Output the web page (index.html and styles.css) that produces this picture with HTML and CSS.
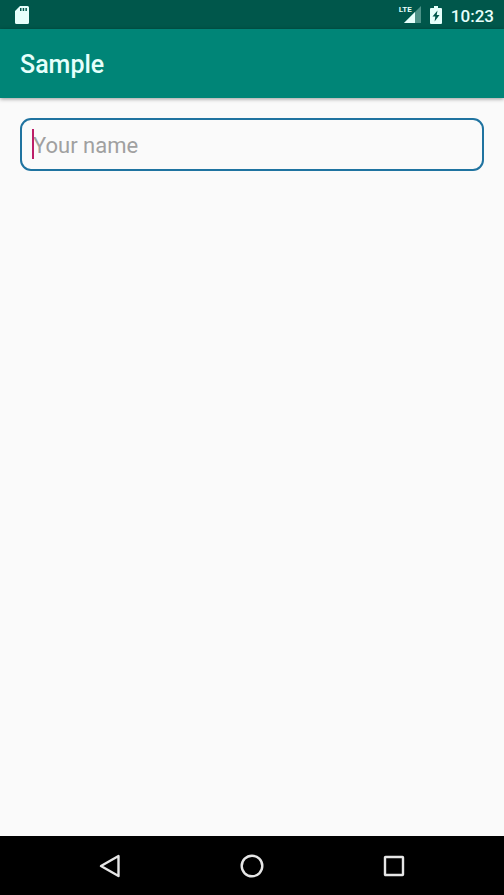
FILE: index.html
```html
<!DOCTYPE html>
<html lang="en">
<head>
<meta charset="utf-8">
<meta name="viewport" content="width=device-width, initial-scale=1">
<title>Sample</title>
<link rel="stylesheet" href="styles.css">
</head>
<body>
<div class="status-bar">
  <svg class="sd-card" viewBox="0 0 16 20" width="16" height="20" aria-hidden="true">
    <path fill="#e6fffb" fill-rule="evenodd" d="M6 1H13.500Q15 1 15 2.500V17.500Q15 19 13.500 19H2.500Q1 19 1 17.500V6ZM6 3V6H7.500V3ZM8.700 3V6H10.200V3ZM11.400 3V6H12.900V3Z"/>
  </svg>
  <div class="status-icons">
    <div class="signal">
      <span class="network">LTE</span>
      <svg viewBox="0 0 18 17" width="18" height="17" aria-hidden="true">
        <path fill="#4d9388" d="M18 0V17H1Z"/>
        <path fill="#e6fffb" d="M12 6V17H1Z"/>
      </svg>
    </div>
    <svg viewBox="0 0 12 18" width="12" height="18" aria-hidden="true">
      <path fill="#e6fffb" fill-rule="evenodd" d="M4 0H8V2H11Q12 2 12 3V17Q12 18 11 18H1Q0 18 0 17V3Q0 2 1 2H4ZM7.500 4.500L2.500 10.500H5.300L4.600 15.500L9.500 9H6.700Z"/>
    </svg>
    <time class="clock">10:23</time>
  </div>
</div>
<header class="app-bar">
  <h1 class="title">Sample</h1>
</header>
<main class="content">
  <div class="field">
    <input class="name-input" type="text" placeholder="Your name" aria-label="Your name">
    <span class="caret"></span>
  </div>
</main>
<nav class="nav-bar">
  <button class="nav-button" type="button" aria-label="Back">
    <svg viewBox="0 0 24 24" width="24" height="24"><path d="M3 12L20.500 2V22Z"/></svg>
  </button>
  <button class="nav-button" type="button" aria-label="Home">
    <svg viewBox="0 0 24 24" width="24" height="24"><circle cx="12" cy="12" r="10.300"/></svg>
  </button>
  <button class="nav-button" type="button" aria-label="Recent apps">
    <svg viewBox="0 0 24 24" width="24" height="24"><rect x="3" y="3" width="18" height="18" rx="0.500"/></svg>
  </button>
</nav>
</body>
</html>
```
FILE: styles.css
```css
* {
  box-sizing: border-box;
}

body {
  display: flex;
  flex-direction: column;
  min-height: 100vh;
  margin: 0;
  background: #fafafa;
  font-family: Roboto, "Liberation Sans", sans-serif;
}

svg {
  display: block;
}

.status-bar {
  display: flex;
  align-items: center;
  justify-content: space-between;
  height: 29px;
  padding: 0 10px 0 14px;
  background: #00574b;
  color: #e6fffb;
}

.status-icons {
  display: flex;
  align-items: center;
  gap: 9px;
}

.signal {
  position: relative;
  padding-left: 4px;
}

.network {
  position: absolute;
  top: 0;
  left: 0;
  font-size: 8px;
  font-weight: 700;
  line-height: 8px;
}

.clock {
  font-size: 17px;
  font-weight: 500;
  line-height: 28px;
  padding-top: 2px;
}

.app-bar {
  display: flex;
  align-items: center;
  height: 69px;
  padding: 2px 20px 0;
  background: #008577;
  box-shadow: 0 1px 4px rgba(0, 0, 0, 0.4);
}

.title {
  margin: 0;
  color: #e6fffb;
  font-size: 25px;
  font-weight: 500;
  line-height: 32px;
}

.content {
  flex: 1;
  padding: 20px;
}

.field {
  position: relative;
}

.name-input {
  display: block;
  width: 100%;
  height: 53px;
  padding: 2px 10px 0 11px;
  border: 2px solid #1f73a0;
  border-radius: 11px;
  outline: none;
  background: transparent;
  color: #212121;
  font-family: inherit;
  font-size: 22px;
}

.name-input::placeholder {
  color: #a0a0a0;
  opacity: 1;
}

.caret {
  position: absolute;
  top: 11px;
  left: 12px;
  width: 2px;
  height: 30px;
  background: #bd1e68;
}

.nav-bar {
  display: grid;
  grid-template-columns: repeat(3, 1fr);
  height: 59px;
  padding: 0 39px;
  background: #000;
}

.nav-button {
  display: flex;
  align-items: center;
  justify-content: center;
  padding: 0;
  border: 0;
  background: none;
}

.nav-button svg {
  fill: none;
  stroke: #e6e6e6;
  stroke-width: 2.4;
  stroke-linejoin: round;
}
```
